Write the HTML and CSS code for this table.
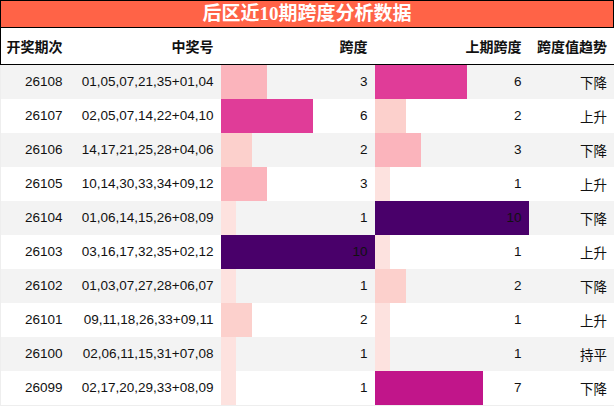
FILE: index.html
```html
<!DOCTYPE html>
<html lang="zh-CN">
<head>
<meta charset="utf-8">
<title>后区近10期跨度分析数据</title>
<link rel="stylesheet" href="styles.css">
</head>
<body>
<div class="wrap">
  <div class="title">后区近10期跨度分析数据</div>
  <table class="tbl">
    <colgroup>
      <col class="c1"><col class="c2"><col class="c3"><col class="c4"><col class="c5">
    </colgroup>
    <thead>
      <tr><th>开奖期次</th><th>中奖号</th><th>跨度</th><th>上期跨度</th><th>跨度值趋势</th></tr>
    </thead>
    <tbody>
      <tr><td>26108</td><td>01,05,07,21,35+01,04</td><td class="bc"><span class="bar" style="width:46px;background:#fbb4bc"></span><span class="v">3</span></td><td class="bc"><span class="bar" style="width:92px;background:#e03c98"></span><span class="v">6</span></td><td>下降</td></tr>
      <tr><td>26107</td><td>02,05,07,14,22+04,10</td><td class="bc"><span class="bar" style="width:92px;background:#e03c98"></span><span class="v">6</span></td><td class="bc"><span class="bar" style="width:31px;background:#fcd0cc"></span><span class="v">2</span></td><td>上升</td></tr>
      <tr><td>26106</td><td>14,17,21,25,28+04,06</td><td class="bc"><span class="bar" style="width:31px;background:#fcd0cc"></span><span class="v">2</span></td><td class="bc"><span class="bar" style="width:46px;background:#fbb4bc"></span><span class="v">3</span></td><td>下降</td></tr>
      <tr><td>26105</td><td>10,14,30,33,34+09,12</td><td class="bc"><span class="bar" style="width:46px;background:#fbb4bc"></span><span class="v">3</span></td><td class="bc"><span class="bar" style="width:15px;background:#fde2df"></span><span class="v">1</span></td><td>上升</td></tr>
      <tr><td>26104</td><td>01,06,14,15,26+08,09</td><td class="bc"><span class="bar" style="width:15px;background:#fde2df"></span><span class="v">1</span></td><td class="bc"><span class="bar" style="width:154px;background:#49006a"></span><span class="v">10</span></td><td>下降</td></tr>
      <tr><td>26103</td><td>03,16,17,32,35+02,12</td><td class="bc"><span class="bar" style="width:154px;background:#49006a"></span><span class="v">10</span></td><td class="bc"><span class="bar" style="width:15px;background:#fde2df"></span><span class="v">1</span></td><td>上升</td></tr>
      <tr><td>26102</td><td>01,03,07,27,28+06,07</td><td class="bc"><span class="bar" style="width:15px;background:#fde2df"></span><span class="v">1</span></td><td class="bc"><span class="bar" style="width:31px;background:#fcd0cc"></span><span class="v">2</span></td><td>下降</td></tr>
      <tr><td>26101</td><td>09,11,18,26,33+09,11</td><td class="bc"><span class="bar" style="width:31px;background:#fcd0cc"></span><span class="v">2</span></td><td class="bc"><span class="bar" style="width:15px;background:#fde2df"></span><span class="v">1</span></td><td>上升</td></tr>
      <tr><td>26100</td><td>02,06,11,15,31+07,08</td><td class="bc"><span class="bar" style="width:15px;background:#fde2df"></span><span class="v">1</span></td><td class="bc"><span class="bar" style="width:15px;background:#fde2df"></span><span class="v">1</span></td><td>持平</td></tr>
      <tr><td>26099</td><td>02,17,20,29,33+08,09</td><td class="bc"><span class="bar" style="width:15px;background:#fde2df"></span><span class="v">1</span></td><td class="bc"><span class="bar" style="width:108px;background:#c1158a"></span><span class="v">7</span></td><td>下降</td></tr>
    </tbody>
  </table>
</div>
</body>
</html>
```

FILE: styles.css
```css
html, body {
  margin: 0;
  padding: 0;
  background: #ffffff;
}

.wrap {
  width: 614px;
}

.title {
  box-sizing: border-box;
  height: 28px;
  border: 1px solid #000;
  background: #ff6347;
  color: #ffffff;
  font-family: "Liberation Serif", "Noto Sans CJK SC", serif;
  font-weight: bold;
  font-size: 19px;
  line-height: 26px;
  text-align: center;
}

.tbl {
  width: 614px;
  border-collapse: collapse;
  table-layout: fixed;
  font-family: "Liberation Sans", "Noto Sans CJK SC", sans-serif;
  font-size: 13.5px;
  color: #111;
}

.c1 { width: 69px; }
.c2 { width: 151px; }
.c3 { width: 154px; }
.c4 { width: 154px; }
.c5 { width: 86px; }

.tbl th {
  box-sizing: border-box;
  height: 36px;
  padding: 0 7px 0 0;
  text-align: right;
  font-family: "Noto Sans CJK SC", sans-serif;
  font-weight: bold;
  font-size: 14px;
  color: #111;
  border-bottom: 1px solid #000;
}

.tbl thead tr {
  border-left: 1px solid #000;
  border-right: 1px solid #000;
}

.tbl tbody tr {
  border-left: 1px solid #eeeeee;
  border-right: 1px solid #eeeeee;
}

.tbl tbody tr:last-child {
  border-bottom: 1px solid #eeeeee;
}

.tbl tbody tr:nth-child(odd) {
  background: #f3f3f3;
}

.tbl td {
  height: 34px;
  padding: 0 7px 0 0;
  text-align: right;
  white-space: nowrap;
}

.tbl td.bc {
  position: relative;
}

.bar {
  position: absolute;
  left: 0;
  top: 0;
  bottom: 0;
}

.v {
  position: relative;
}
```
